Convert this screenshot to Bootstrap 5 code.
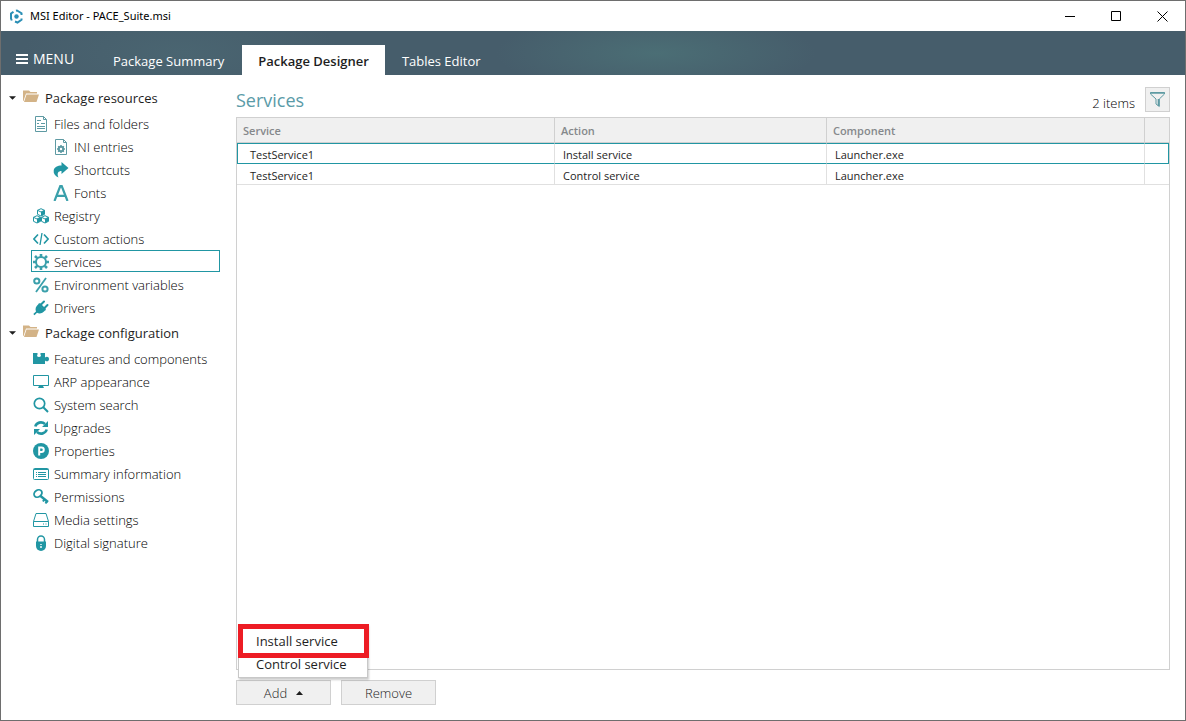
<!DOCTYPE html>
<html lang="en">
<head>
<meta charset="utf-8">
<meta name="viewport" content="width=device-width, initial-scale=1">
<title>MSI Editor - PACE_Suite.msi</title>
<link rel="stylesheet" href="https://cdn.jsdelivr.net/npm/bootstrap@5.3.0/dist/css/bootstrap.min.css">
<style>
  :root { --teal: #2196a3; --line: #d0d0d0; --panel: #f0f0f0; }
  body { font-family: "Open Sans", "Noto Sans", sans-serif; font-size: 13px; line-height: 20px; color: #1e1e1e; background: #fff; }
  a { color: inherit; text-decoration: none; }
  svg { display: block; flex: none; }
  .app-window { border: 1px solid #6e6e6e; white-space: nowrap; }
  .title-bar { height: 30px; color: #000; padding-left: 8px; }
  .title-text { font-family: "Noto Sans", sans-serif; font-size: 11px; padding-left: 6px; }
  .win-btn { width: 46px; height: 30px; padding: 0; border: 0; background: none; display: flex; align-items: center; justify-content: center; }
  .ribbon { height: 44px; color: #fff; font-size: 13px;
    background: radial-gradient(ellipse 160px 40px at 655px 50%, #4b6e75, transparent), radial-gradient(ellipse 160px 50px at 180px 50%, #4a6571, transparent), #465d6b; }
  .menu-btn { width: 96px; padding: 12px 0 0 15px; gap: 5px; font-size: 14px; color: #fff; border: 0; background: none; height: 100%; }
  .ribbon .nav { gap: 2px; }
  .ribbon .nav-link { height: 30px; padding: 6px 16px 0; font-size: 13px; color: #fff; border: 0; border-radius: 0; }
  .ribbon .nav-link.active { background: #fff; color: #1e1e1e; font-weight: 600; }
  .ribbon .nav-link:last-child { padding-left: 15px; }
  .tree { width: 219px; padding: 9px 0 0 8px; flex: none; }
  .tree-group { height: 28px; gap: 6px; }
  .tree-item { height: 22px; margin: 0 0 1px 22px; padding-top: 1px; padding-left: 1px; gap: 5px; border: 1px solid transparent; font-weight: 300; color: #000; }
  .tree-item.deep { padding-left: 21px; }
  .tree-item.active { border-color: var(--teal); }
  .tree-item svg { color: var(--teal); }
  .workspace { padding: 12px 15px 15px 16px; min-width: 0; }
  .page-title { font-size: 18px; line-height: 26px; margin: 0; color: #5a9ba8; font-weight: 400; }
  .item-count { padding-top: 6px; margin-right: 10px; font-weight: 300; color: #000; }
  .filter-btn { width: 25px; height: 25px; padding: 0; border: 1px solid var(--line); background: var(--panel); color: #5e9aa3; display: flex; align-items: center; justify-content: center; }
  .grid-panel { border: 1px solid var(--line); margin: 4px 0 10px; }
  .svc-table { width: 100%; table-layout: fixed; border-collapse: separate; border-spacing: 0; font-size: 11px; line-height: 16px; }
  .svc-table th { height: 25px; background: var(--panel); color: #85888b; font-weight: 600; padding: 1px 6px 0; border-right: 1px solid var(--line); border-bottom: 1px solid var(--line); }
  .svc-table td { height: 21px; padding: 3px 8px 0; border-right: 1px solid #e0e0e0; border-bottom: 1px solid #e0e0e0; }
  .svc-table td:first-child { padding-left: 13px; }
  .svc-table tr > :last-child { border-right: 0; }
  .svc-table .picked td { border-top: 1px solid var(--teal); border-bottom: 1px solid var(--teal); }
  .svc-table .picked td:first-child { border-left: 1px solid var(--teal); padding-left: 12px; }
  .svc-table .picked td:last-child { border-right: 1px solid var(--teal); }
  .cmd-btn { width: 95px; height: 25px; padding: 0; border: 1px solid var(--line); background: var(--panel); color: #1e1e1e; font-weight: 300; gap: 9px; display: flex; align-items: center; justify-content: center; }
  .cmd-bar { gap: 10px; }
  .add-menu { display: block; left: 2px; bottom: 27px; width: 130px; min-width: 0; padding: 0 0 1px; border: 1px solid #c8c8c8; border-top: 0; border-radius: 0; font-size: 13px; box-shadow: 1px 2px 2px #0003; }
  .add-menu .dropdown-item { height: 24px; line-height: 24px; padding: 0 17px; color: #1e1e1e; }
  .add-menu .marked { position: relative; z-index: 1; width: 131px; height: 34px; margin: 0 0 -6px -1px; padding: 0 13px; border: 5px solid #ed1c24; background: #fff; }
</style>
</head>
<body>
<div class="app-window d-flex flex-column min-vh-100">
  <header class="title-bar d-flex align-items-center">
    <svg width="15" height="15" viewBox="0 0 15 15" fill="none" stroke="#2b8fb5" stroke-width="2"><path d="M2.800 11.500 2 9.500V4.500L4.500 2.800M7 1.800 8 1.500l4.500 2.700V6M12.500 9.500v1.200L8.500 13.500 6 12.500"/><circle cx="7.500" cy="7.500" r="2.200" fill="#2b8fb5" stroke="none"/></svg>
    <span class="title-text me-auto">MSI Editor - PACE_Suite.msi</span>
    <button class="win-btn" aria-label="Minimize"><svg width="10" height="11" shape-rendering="crispEdges"><path d="M0 5h10v1H0z"/></svg></button>
    <button class="win-btn" aria-label="Maximize"><svg width="11" height="11" fill="none" stroke="#000"><path d="M.5.5h9v9h-9z"/></svg></button>
    <button class="win-btn" aria-label="Close"><svg width="11" height="11" stroke="#000"><path d="m.5.5 10 10m0-10-10 10"/></svg></button>
  </header>

  <nav class="ribbon d-flex align-items-end">
    <button class="menu-btn d-flex align-items-center"><svg width="12" height="12" fill="#fff" shape-rendering="crispEdges"><path d="M0 1h12v2H0zM0 5h12v2H0zM0 9h12v2H0z"/></svg>MENU</button>
    <div class="nav flex-nowrap">
      <a class="nav-link" href="#">Package Summary</a>
      <a class="nav-link active" href="#">Package Designer</a>
      <a class="nav-link" href="#">Tables Editor</a>
    </div>
  </nav>

  <div class="d-flex flex-grow-1">
    <aside class="tree">
      <div class="tree-group d-flex align-items-center">
        <svg width="7" height="4" viewBox="0 0 8 4" fill="#1e1e1e"><path d="M0 0h8L4 4z"/></svg>
        <svg width="17" height="16" viewBox="0 1 17 16" fill="#d3b387"><path d="M1 12V1.500h6L8.500 3H15v1.500H4L1.500 12zM4.500 5.500H17L14.500 13H2z"/></svg>
        <span>Package resources</span>
      </div>
      <a class="tree-item d-flex align-items-center" href="#"><svg width="16" height="16" viewBox="0 0 16 16" fill="none" stroke="#5e9aa3"><path d="M2.500.5h8l3 3v12h-11zM10.500.5v3h3M4 4.500h4M4 7.500h2M8 7.500h4M4 10.500h8M4 12.500h8"/></svg>Files and folders</a>
      <a class="tree-item deep d-flex align-items-center" href="#"><svg width="16" height="16" viewBox="0 0 16 16" fill="none" stroke="#5e9aa3"><path d="M2.500.5h8l3 3v12h-11zM10.500.5v3h3"/><circle cx="8" cy="10" r="2.200" stroke-width="2"/><path d="M8 6v2M8 12v2M4 10h2M10 10h2M5.200 7.200l1.200 1.200M9.600 11.600l1.200 1.200M10.800 7.200 9.600 8.400M6.400 11.600l-1.200 1.200" stroke-width="1.500"/></svg>INI entries</a>
      <a class="tree-item deep d-flex align-items-center" href="#"><svg width="16" height="16" viewBox="0 0 16 16" fill="currentColor"><path d="M8.500 0 15.500 6l-7 6V9C5.500 9 3.500 11 5.500 15.500 2 14 .3 11.500.7 8.500 1.200 5 4.500 3.500 8.500 3.500z"/></svg>Shortcuts</a>
      <a class="tree-item deep d-flex align-items-center" href="#"><svg width="16" height="16" viewBox="0 0 16 16" fill="none" stroke="#3aa0ab" stroke-width="2.200"><path d="M1.500 16 7.300 1h1.400l5.800 15M4 10.800h8"/></svg>Fonts</a>
      <a class="tree-item d-flex align-items-center" href="#"><svg width="16" height="16" viewBox="0 0 16 16"><g fill="#fff" stroke="currentColor"><path d="M8 .7 11.500 2.300v4L8 8 4.500 6.300v-4zM4 7.700l3.500 1.600v4L4 15 .5 13.300v-4zM12 7.700l3.500 1.600v4L12 15l-3.500-1.700v-4z"/></g><path fill="currentColor" d="M8 4l3.500-1.700v4L8 8zM4 11l3.500-1.700v4L4 15zM12 11l3.500-1.700v4L12 15z"/><path fill="none" stroke="currentColor" d="M4.500 2.300 8 4l3.500-1.700M.5 9.300 4 11l3.500-1.700M8.500 9.300 12 11l3.500-1.700"/></svg>Registry</a>
      <a class="tree-item d-flex align-items-center" href="#"><svg width="16" height="16" viewBox="0 0 16 16" fill="none" stroke="currentColor" stroke-width="1.600"><path d="M5 3.500.9 8 5 12.500M11 3.500 15.100 8 11 12.500"/><path d="M9 2 7 14" stroke-width="1.300"/></svg>Custom actions</a>
      <a class="tree-item active d-flex align-items-center" href="#" aria-current="page"><svg width="16" height="16" viewBox="0 0 16 16" fill="none" stroke="#3aa0ab"><circle cx="8" cy="8" r="5" stroke-width="2"/><path stroke-width="2.600" d="M8 0v3M8 13v3M0 8h3M13 8h3M2 2l2.200 2.200M11.800 11.800 14 14M14 2l-2.200 2.200M4.200 11.800 2 14"/></svg>Services</a>
      <a class="tree-item d-flex align-items-center" href="#"><svg width="16" height="16" viewBox="0 0 16 16" fill="none" stroke="#3aa0ab" stroke-width="2"><circle cx="3.800" cy="4" r="2.600"/><circle cx="12" cy="12" r="2.600"/><path d="M13 1 3 15" stroke-width="1.800"/></svg>Environment variables</a>
      <a class="tree-item d-flex align-items-center" href="#"><svg width="16" height="16" viewBox="0 0 16 16" fill="currentColor"><path d="M5.500 4 12 10.500C9.500 13.500 6.500 14 4 12.800L1.500 15.300.3 14 3 11.500C2 9 2.500 6.500 5.500 4z"/><path fill="none" stroke="currentColor" stroke-width="2" stroke-linecap="round" d="M7 5.500 11 1.500M10.500 9 14.500 5"/><path d="m5 4 2-1 6 6-1 2z"/></svg>Drivers</a>

      <div class="tree-group d-flex align-items-center">
        <svg width="7" height="4" viewBox="0 0 8 4" fill="#1e1e1e"><path d="M0 0h8L4 4z"/></svg>
        <svg width="17" height="16" viewBox="0 1 17 16" fill="#d3b387"><path d="M1 12V1.500h6L8.500 3H15v1.500H4L1.500 12zM4.500 5.500H17L14.500 13H2z"/></svg>
        <span>Package configuration</span>
      </div>
      <a class="tree-item d-flex align-items-center" href="#"><svg width="16" height="16" viewBox="0 0 16 16" fill="currentColor"><path d="M0 2h4.500v1.500C3.500 5 4.300 6 6 6s2.500-1 1.500-2.500V2H12v4.500c1.500-1.500 4-1 4 1.500s-2.500 3-4 1.500V13H0z"/></svg>Features and components</a>
      <a class="tree-item d-flex align-items-center" href="#"><svg width="16" height="16" viewBox="0 0 16 16"><path fill="none" stroke="currentColor" d="M.5 1.500h15v10H.5z"/><path fill="currentColor" d="M6 12h4l1 2H5z"/></svg>ARP appearance</a>
      <a class="tree-item d-flex align-items-center" href="#"><svg width="16" height="16" viewBox="0 0 16 16" fill="none" stroke="currentColor" stroke-width="1.700"><circle cx="6.500" cy="6.500" r="5.200"/><path d="m10.300 10.300 4.700 4.700" stroke-width="2"/></svg>System search</a>
      <a class="tree-item d-flex align-items-center" href="#"><svg width="16" height="16" viewBox="0 0 16 16"><path fill="none" stroke="currentColor" stroke-width="2.600" d="M2.300 6.500C3.500 2.500 8.500 1 12 4M13.700 9.500C12.500 13.500 7.500 15 4 12"/><path fill="currentColor" d="M15 1v6H9zM1 15V9h6z"/></svg>Upgrades</a>
      <a class="tree-item d-flex align-items-center" href="#"><svg width="16" height="16" viewBox="0 0 16 16"><circle cx="8" cy="8" r="8" fill="currentColor"/><path fill="none" stroke="#fff" stroke-width="2" d="M6.200 12.500V4.500h2.300a2.200 2.200 0 0 1 0 4.500H6.200"/></svg>Properties</a>
      <a class="tree-item d-flex align-items-center" href="#"><svg width="16" height="16" viewBox="0 0 16 16" fill="none" stroke="currentColor"><rect x=".5" y="2.500" width="15" height="11" rx="1"/><path d="M1 3.500h14M3 6.500h1M5 6.500h8M3 8.500h1M5 8.500h8M3 10.500h1M5 10.500h8"/></svg>Summary information</a>
      <a class="tree-item d-flex align-items-center" href="#"><svg width="16" height="16" viewBox="0 0 16 16" fill="none" stroke="currentColor"><ellipse cx="5" cy="4.500" rx="4.200" ry="3.300" stroke-width="1.800" transform="rotate(-35 5 4.500)"/><path stroke-width="2.400" d="m7.500 7 7.500 6"/><path stroke-width="2" d="m11.500 10-1.500 2.500M14 12l-1.500 2.500"/></svg>Permissions</a>
      <a class="tree-item d-flex align-items-center" href="#"><svg width="16" height="16" viewBox="0 0 16 16" fill="none" stroke="currentColor"><path d="M.5 9.500 3 1.500h10l2.500 8v5H.5zM.5 9.500h15M10 12h1M12.500 12h1"/></svg>Media settings</a>
      <a class="tree-item d-flex align-items-center" href="#"><svg width="16" height="16" viewBox="0 0 16 16"><path fill="none" stroke="currentColor" stroke-width="1.500" d="M4.500 8V4.500a3.500 3.500 0 0 1 7 0V8"/><path fill="currentColor" d="M3 6.500h10V11a5 5 0 0 1-10 0z"/><path fill="#fff" d="M7.300 9h1.400v1H7.300zM7.300 11h1.400v2H7.300z"/></svg>Digital signature</a>
    </aside>

    <main class="workspace d-flex flex-column flex-grow-1">
      <div class="d-flex align-items-start">
        <h1 class="page-title me-auto">Services</h1>
        <span class="item-count">2 items</span>
        <button class="filter-btn" aria-label="Filter"><svg width="17" height="17" viewBox="0 0 17 17" fill="none" stroke="currentColor"><path d="M1.500 1.500h14v1.500l-5.200 5v7.500L7 13V8L1.500 3z"/><path d="M1.500 2h14M9.500 8v7" stroke-width="1.600"/></svg></button>
      </div>
      <div class="grid-panel flex-grow-1">
        <table class="svc-table">
          <colgroup><col style="width:34.120%"><col style="width:29.180%"><col><col style="width:24px"></colgroup>
          <thead><tr><th>Service</th><th>Action</th><th>Component</th><th></th></tr></thead>
          <tbody>
            <tr class="picked"><td>TestService1</td><td>Install service</td><td>Launcher.exe</td><td></td></tr>
            <tr><td>TestService1</td><td>Control service</td><td>Launcher.exe</td><td></td></tr>
          </tbody>
        </table>
      </div>
      <div class="cmd-bar d-flex">
        <div class="dropup position-relative">
          <button class="cmd-btn" aria-expanded="true">Add <svg width="7" height="4" fill="#1e1e1e"><path d="M0 4h7L3.500 0z"/></svg></button>
          <div class="dropdown-menu add-menu">
            <button class="dropdown-item marked">Install service</button>
            <button class="dropdown-item">Control service</button>
          </div>
        </div>
        <button class="cmd-btn">Remove</button>
      </div>
    </main>
  </div>
</div>
<script src="https://cdn.jsdelivr.net/npm/bootstrap@5.3.0/dist/js/bootstrap.bundle.min.js"></script>
</body>
</html>
